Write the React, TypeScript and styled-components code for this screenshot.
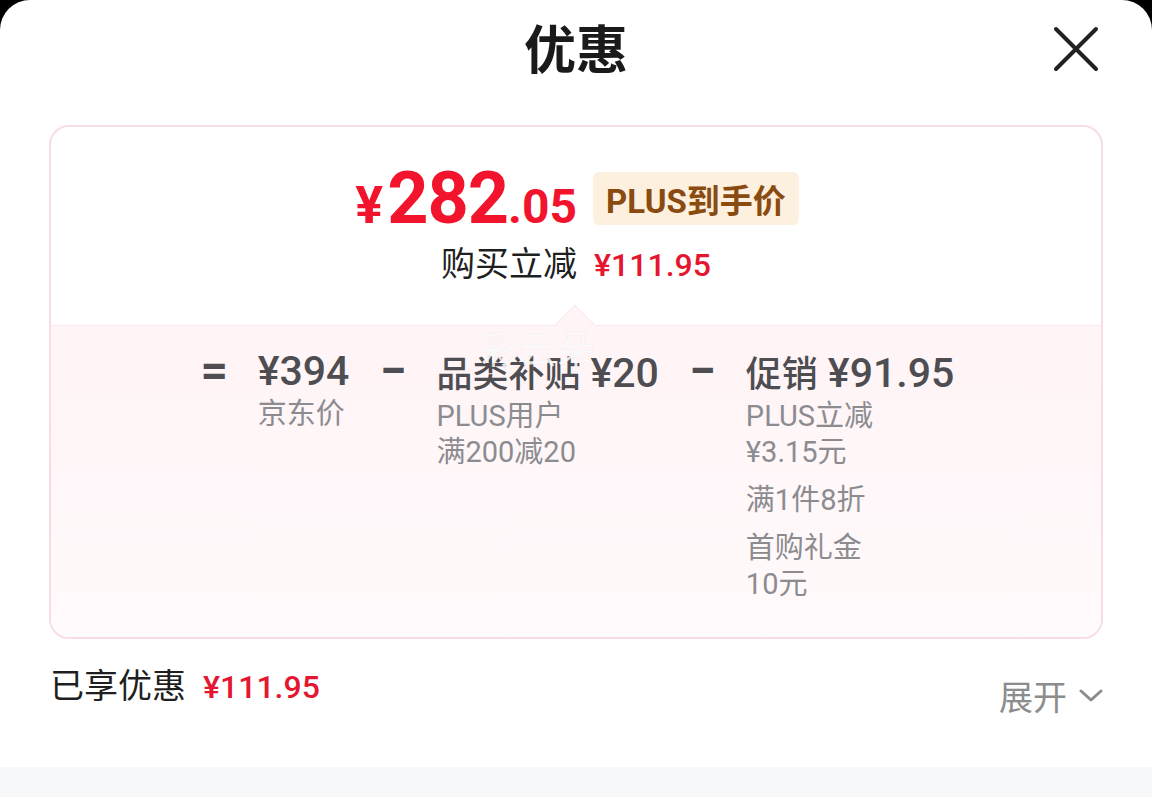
import React from "react";
import styled, { createGlobalStyle } from "styled-components";

const GlobalStyle = createGlobalStyle`
  html, body {
    margin: 0;
    padding: 0;
    background: #000;
  }
  body {
    font-family: Roboto, "Noto Sans CJK SC", sans-serif;
  }
  * {
    box-sizing: border-box;
  }
`;

interface Part {
  title: string;
  amount?: string;
  notes: string[][];
}

const parts: Part[] = [
  { title: "", amount: "¥394", notes: [["京东价"]] },
  { title: "品类补贴", amount: "¥20", notes: [["PLUS用户", "满200减20"]] },
  {
    title: "促销",
    amount: "¥91.95",
    notes: [["PLUS立减", "¥3.15元"], ["满1件8折"], ["首购礼金", "10元"]],
  },
];

export default function App() {
  return (
    <>
      <GlobalStyle />
      <Sheet>
        <Header>
          <span />
          <Title>优惠</Title>
          <CloseButton aria-label="关闭">
            <svg width="48" height="48" viewBox="0 0 48 48" fill="none">
              <path d="M4 4L44 44M44 4L4 44" stroke="#222" strokeWidth="4" strokeLinecap="round" />
            </svg>
          </CloseButton>
        </Header>

        <Card>
          <Summary>
            <PriceRow>
              <Price>
                <Yen>¥</Yen>
                <Whole>282</Whole>
                <Cents>.05</Cents>
              </Price>
              <Badge>PLUS到手价</Badge>
            </PriceRow>
            <SubRow>
              购买立减<RedAmount>¥111.95</RedAmount>
            </SubRow>
          </Summary>

          <Breakdown>
            <Notch />
            <Watermark>彩云朵</Watermark>
            <Formula>
              <Operator>=</Operator>
              {parts.map((p, i) => (
                <React.Fragment key={i}>
                  {i > 0 && <Operator>−</Operator>}
                  <Item>
                    <ItemHead>
                      {p.title && <span>{p.title}</span>}
                      <Amount>{p.amount}</Amount>
                    </ItemHead>
                    {p.notes.map((group, j) => (
                      <NoteGroup key={j}>
                        {group.map((line, k) => (
                          <Note key={k}>{line}</Note>
                        ))}
                      </NoteGroup>
                    ))}
                  </Item>
                </React.Fragment>
              ))}
            </Formula>
          </Breakdown>
        </Card>

        <Footer>
          <Enjoyed>
            已享优惠<RedAmount>¥111.95</RedAmount>
          </Enjoyed>
          <Expand>
            展开
            <svg width="24" height="14" viewBox="0 0 24 14" fill="none">
              <path d="M2 2L12 11L22 2" stroke="#8c8c8c" strokeWidth="3" strokeLinecap="round" strokeLinejoin="round" />
            </svg>
          </Expand>
        </Footer>
        <Band />
      </Sheet>
    </>
  );
}

const Sheet = styled.div`
  width: 1152px;
  height: 797px;
  background: #fff;
  border-radius: 30px 30px 0 0;
  display: flex;
  flex-direction: column;
  overflow: hidden;
`;

const Header = styled.div`
  height: 98px;
  display: grid;
  grid-template-columns: 1fr auto 1fr;
  align-items: center;
  padding: 0 50px 0 50px;
  margin-bottom: 27px;
`;

const Title = styled.h1`
  margin: 0 0 4px;
  font-family: "Noto Sans CJK SC", sans-serif;
  font-size: 52px;
  font-weight: 700;
  color: #1a1a1a;
  line-height: 1;
`;

const CloseButton = styled.button`
  justify-self: end;
  width: 52px;
  height: 52px;
  padding: 0;
  border: 0;
  background: none;
  display: flex;
  align-items: center;
  justify-content: center;
`;

const Card = styled.div`
  margin: 0 49px;
  height: 514px;
  border: 2px solid #f9dde4;
  border-radius: 20px;
  display: flex;
  flex-direction: column;
  overflow: hidden;
`;

const Summary = styled.div`
  height: 198px;
  display: flex;
  flex-direction: column;
  align-items: center;
  justify-content: center;
  gap: 6px;
  padding-bottom: 4px;
`;

const PriceRow = styled.div`
  display: flex;
  align-items: center;
  gap: 16px;
  padding-left: 2px;
`;

const Price = styled.div`
  color: #f2142c;
  font-family: Roboto, sans-serif;
  font-weight: 700;
  line-height: 1;
  display: flex;
  align-items: baseline;
`;

const Yen = styled.span`
  font-size: 52px;
  margin-right: 4px;
`;

const Whole = styled.span`
  font-size: 72px;
  letter-spacing: -1px;
`;

const Cents = styled.span`
  font-size: 48px;
`;

const Badge = styled.span`
  background: #fdf0de;
  color: #8a4b10;
  border-radius: 6px;
  height: 53px;
  padding: 0 13px;
  display: flex;
  align-items: center;
  font-family: Roboto, "Noto Sans CJK SC", sans-serif;
  font-weight: 700;
  font-size: 33px;
`;

const SubRow = styled.div`
  font-family: "Noto Sans CJK SC", sans-serif;
  font-size: 34px;
  color: #1f1f1f;
  line-height: 42px;
  display: flex;
  align-items: baseline;
`;

const RedAmount = styled.span`
  font-family: Roboto, sans-serif;
  font-weight: 500;
  color: #e5162f;
  font-size: 32px;
  margin-left: 17px;
`;

const Breakdown = styled.div`
  flex: 1;
  position: relative;
  background: linear-gradient(#fff4f6, #fffafb);
  border-top: 1px solid #fbe9ee;
  padding-top: 20px;
`;

const Notch = styled.div`
  position: absolute;
  left: 509px;
  top: -15px;
  width: 30px;
  height: 30px;
  background: #fff4f6;
  border-left: 1px solid #fbe9ee;
  border-top: 1px solid #fbe9ee;
  transform: rotate(45deg);
`;

const Watermark = styled.span`
  position: absolute;
  left: 430px;
  top: 2px;
  font-family: "Noto Sans CJK SC", sans-serif;
  font-size: 38px;
  line-height: 1;
  color: rgba(255, 255, 255, 0.85);
  text-shadow: 0 0 1px rgba(0, 0, 0, 0.1);
  pointer-events: none;
`;

const Formula = styled.div`
  display: flex;
  justify-content: center;
  align-items: flex-start;
  gap: 31px;
  padding-left: 4px;
`;

const Operator = styled.span`
  width: 25px;
  display: flex;
  justify-content: center;
  font-family: Roboto, sans-serif;
  font-size: 48px;
  font-weight: 700;
  color: #4d4d52;
  line-height: 50px;
`;

const Item = styled.div`
  display: flex;
  flex-direction: column;
  gap: 12px;
`;

const ItemHead = styled.div`
  display: flex;
  align-items: baseline;
  gap: 10px;
  font-family: "Noto Sans CJK SC", sans-serif;
  font-size: 36px;
  font-weight: 500;
  color: #4d4d52;
  line-height: 50px;
  margin-bottom: -12px;
`;

const Amount = styled.span`
  font-family: Roboto, sans-serif;
  font-size: 41px;
  font-weight: 500;
`;

const NoteGroup = styled.div`
  display: flex;
  flex-direction: column;
`;

const Note = styled.span`
  font-family: Roboto, "Noto Sans CJK SC", sans-serif;
  font-size: 29px;
  color: #8c8c90;
  line-height: 36px;
`;

const Footer = styled.div`
  flex: 1;
  display: flex;
  justify-content: space-between;
  align-items: flex-start;
  padding: 24px 49px 0 50px;
`;

const Enjoyed = styled.div`
  font-family: "Noto Sans CJK SC", sans-serif;
  font-size: 34px;
  color: #1f1f1f;
  line-height: 42px;
  display: flex;
  align-items: baseline;
`;

const Expand = styled.div`
  margin-top: 12px;
  font-family: "Noto Sans CJK SC", sans-serif;
  font-size: 34px;
  color: #8c8c8c;
  line-height: 42px;
  display: flex;
  align-items: center;
  gap: 12px;
`;

const Band = styled.div`
  height: 30px;
  background: #f7f8fa;
`;
